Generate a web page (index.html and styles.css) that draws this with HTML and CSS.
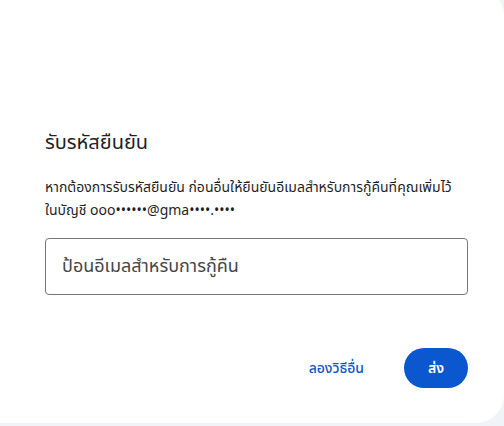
FILE: index.html
```html
<!DOCTYPE html>
<html lang="th">
<head>
<meta charset="utf-8">
<link rel="stylesheet" href="styles.css">
</head>
<body>
<div class="card">
  <h1 class="title">รับรหัสยืนยัน</h1>
  <p class="desc">หากต้องการรับรหัสยืนยัน ก่อนอื่นให้ยืนยันอีเมลสำหรับการกู้คืนที่คุณเพิ่มไว้ในบัญชี ooo••••••@gma••••.••••</p>
  <div class="field"><span class="placeholder">ป้อนอีเมลสำหรับการกู้คืน</span></div>
  <div class="actions">
    <button class="btn-text">ลองวิธีอื่น</button>
    <button class="btn-fill">ส่ง</button>
  </div>
</div>
</body>
</html>
```
FILE: styles.css
```css
html, body {
  margin: 0;
  padding: 0;
  height: 100%;
  overflow: hidden;
}
body {
  background: #f0f4f9;
  font-family: "Noto Sans Thai", "Noto Sans", "DejaVu Sans", sans-serif;
}
.card {
  box-sizing: border-box;
  width: 504px;
  height: 435px;
  margin-top: -12px;
  background: #ffffff;
  border-radius: 0 28px 28px 0;
  padding: 141px 36px 0 45px;
}
.title {
  margin: 0;
  font-size: 20px;
  font-weight: 400;
  line-height: 28px;
  color: #1f1f1f;
}
.desc {
  margin: 19px 0 0;
  max-width: 416px;
  font-size: 14px;
  line-height: 23px;
  color: #1f1f1f;
}
.field {
  margin-top: 16px;
  height: 57px;
  box-sizing: border-box;
  border: 1px solid #747775;
  border-radius: 4px;
  display: flex;
  align-items: center;
  padding: 0 16px;
}
.placeholder {
  font-size: 18px;
  color: #444746;
}
.actions {
  margin-top: 53px;
  display: flex;
  justify-content: flex-end;
  align-items: center;
  gap: 16px;
}
button {
  font-family: inherit;
  border: 0;
  cursor: pointer;
}
.btn-text {
  background: none;
  color: #0b57d0;
  font-size: 14px;
  font-weight: 500;
  height: 40px;
  padding: 0 24px;
}
.btn-fill {
  background: #0b57d0;
  color: #ffffff;
  font-size: 14px;
  font-weight: 600;
  height: 40px;
  width: 64px;
  border-radius: 20px;
}
```
